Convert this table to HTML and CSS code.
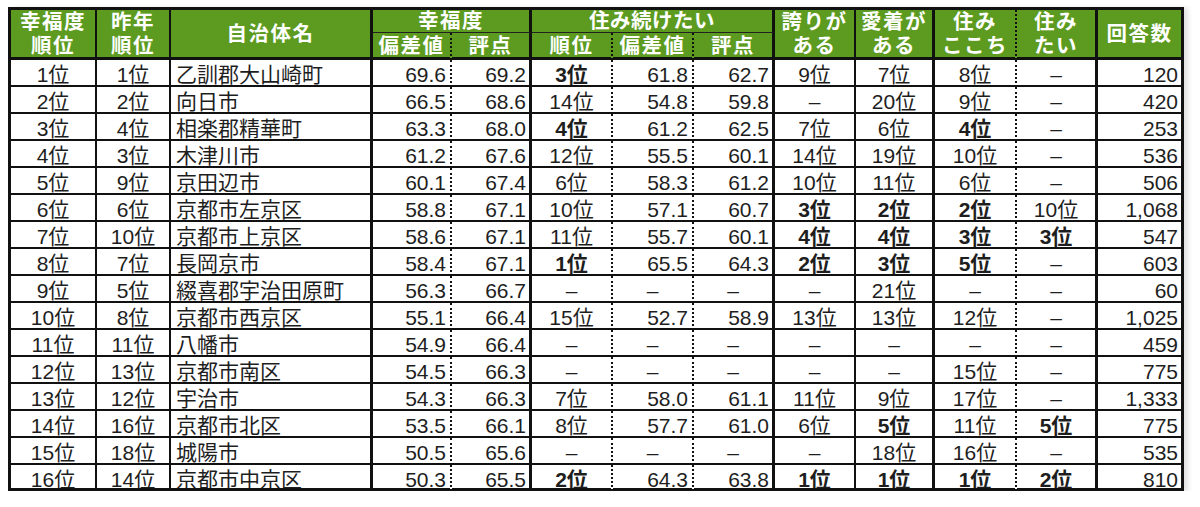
FILE: index.html
```html
<!DOCTYPE html>
<html lang="ja">
<head>
<meta charset="utf-8">
<title>幸福度ランキング 京都府</title>
<link rel="stylesheet" href="styles.css">
</head>
<body>
<div class="wrap">
  <div class="grid" role="table">
    <div class="h h-rank" role="columnheader"><span>幸福度</span><span>順位</span></div>
    <div class="h h-last" role="columnheader"><span>昨年</span><span>順位</span></div>
    <div class="h h-name" role="columnheader">自治体名</div>
    <div class="h h-g1" role="columnheader">幸福度</div>
    <div class="h h-g2" role="columnheader">住み続けたい</div>
    <div class="h h-pride" role="columnheader"><span>誇りが</span><span>ある</span></div>
    <div class="h h-attach" role="columnheader"><span>愛着が</span><span>ある</span></div>
    <div class="h h-koko" role="columnheader"><span>住み</span><span>ここち</span></div>
    <div class="h h-sumi" role="columnheader"><span>住み</span><span>たい</span></div>
    <div class="h h-count" role="columnheader">回答数</div>
    <div class="h h-s h-s1" role="columnheader">偏差値</div>
    <div class="h h-s h-s2" role="columnheader">評点</div>
    <div class="h h-s h-s3" role="columnheader">順位</div>
    <div class="h h-s h-s4" role="columnheader">偏差値</div>
    <div class="h h-s h-s5" role="columnheader">評点</div>

    <div class="row" role="row"><div>1位</div><div>1位</div><div>乙訓郡大山崎町</div><div>69.6</div><div>69.2</div><div class="b">3位</div><div>61.8</div><div>62.7</div><div>9位</div><div>7位</div><div>8位</div><div class="d">–</div><div>120</div></div>
    <div class="row" role="row"><div>2位</div><div>2位</div><div>向日市</div><div>66.5</div><div>68.6</div><div>14位</div><div>54.8</div><div>59.8</div><div class="d">–</div><div>20位</div><div>9位</div><div class="d">–</div><div>420</div></div>
    <div class="row" role="row"><div>3位</div><div>4位</div><div>相楽郡精華町</div><div>63.3</div><div>68.0</div><div class="b">4位</div><div>61.2</div><div>62.5</div><div>7位</div><div>6位</div><div class="b">4位</div><div class="d">–</div><div>253</div></div>
    <div class="row" role="row"><div>4位</div><div>3位</div><div>木津川市</div><div>61.2</div><div>67.6</div><div>12位</div><div>55.5</div><div>60.1</div><div>14位</div><div>19位</div><div>10位</div><div class="d">–</div><div>536</div></div>
    <div class="row" role="row"><div>5位</div><div>9位</div><div>京田辺市</div><div>60.1</div><div>67.4</div><div>6位</div><div>58.3</div><div>61.2</div><div>10位</div><div>11位</div><div>6位</div><div class="d">–</div><div>506</div></div>
    <div class="row" role="row"><div>6位</div><div>6位</div><div>京都市左京区</div><div>58.8</div><div>67.1</div><div>10位</div><div>57.1</div><div>60.7</div><div class="b">3位</div><div class="b">2位</div><div class="b">2位</div><div>10位</div><div>1,068</div></div>
    <div class="row" role="row"><div>7位</div><div>10位</div><div>京都市上京区</div><div>58.6</div><div>67.1</div><div>11位</div><div>55.7</div><div>60.1</div><div class="b">4位</div><div class="b">4位</div><div class="b">3位</div><div class="b">3位</div><div>547</div></div>
    <div class="row" role="row"><div>8位</div><div>7位</div><div>長岡京市</div><div>58.4</div><div>67.1</div><div class="b">1位</div><div>65.5</div><div>64.3</div><div class="b">2位</div><div class="b">3位</div><div class="b">5位</div><div class="d">–</div><div>603</div></div>
    <div class="row" role="row"><div>9位</div><div>5位</div><div>綴喜郡宇治田原町</div><div>56.3</div><div>66.7</div><div class="d">–</div><div class="d">–</div><div class="d">–</div><div class="d">–</div><div>21位</div><div class="d">–</div><div class="d">–</div><div>60</div></div>
    <div class="row" role="row"><div>10位</div><div>8位</div><div>京都市西京区</div><div>55.1</div><div>66.4</div><div>15位</div><div>52.7</div><div>58.9</div><div>13位</div><div>13位</div><div>12位</div><div class="d">–</div><div>1,025</div></div>
    <div class="row" role="row"><div>11位</div><div>11位</div><div>八幡市</div><div>54.9</div><div>66.4</div><div class="d">–</div><div class="d">–</div><div class="d">–</div><div class="d">–</div><div class="d">–</div><div class="d">–</div><div class="d">–</div><div>459</div></div>
    <div class="row" role="row"><div>12位</div><div>13位</div><div>京都市南区</div><div>54.5</div><div>66.3</div><div class="d">–</div><div class="d">–</div><div class="d">–</div><div class="d">–</div><div class="d">–</div><div>15位</div><div class="d">–</div><div>775</div></div>
    <div class="row" role="row"><div>13位</div><div>12位</div><div>宇治市</div><div>54.3</div><div>66.3</div><div>7位</div><div>58.0</div><div>61.1</div><div>11位</div><div>9位</div><div>17位</div><div class="d">–</div><div>1,333</div></div>
    <div class="row" role="row"><div>14位</div><div>16位</div><div>京都市北区</div><div>53.5</div><div>66.1</div><div>8位</div><div>57.7</div><div>61.0</div><div>6位</div><div class="b">5位</div><div>11位</div><div class="b">5位</div><div>775</div></div>
    <div class="row" role="row"><div>15位</div><div>18位</div><div>城陽市</div><div>50.5</div><div>65.6</div><div class="d">–</div><div class="d">–</div><div class="d">–</div><div class="d">–</div><div>18位</div><div>16位</div><div class="d">–</div><div>535</div></div>
    <div class="row last" role="row"><div>16位</div><div>14位</div><div>京都市中京区</div><div>50.3</div><div>65.5</div><div class="b">2位</div><div>64.3</div><div>63.8</div><div class="b">1位</div><div class="b">1位</div><div class="b">1位</div><div class="b">2位</div><div>810</div></div>
  </div>
</div>
</body>
</html>
```

FILE: styles.css
```css
html, body {
  margin: 0;
  padding: 0;
  background: #ffffff;
}

.wrap {
  padding: 7px 0 0 8px;
}

.grid {
  display: grid;
  width: max-content;
  grid-template-columns: 86px 74px 202px 79px 80px 81px 81px 81px 81px 79px 82px 81px 86px;
  grid-template-rows: 23px 27px repeat(15, 27px) 26px;
  border-left: 3px solid #111;
  border-top: 3px solid #111;
  font-family: "Liberation Sans", "Noto Sans CJK JP", sans-serif;
  font-size: 21px;
  color: #1e1e1e;
  box-shadow: 4px 1px 5px rgba(0, 0, 0, 0.12);
}

/* ---------- header ---------- */
.h {
  box-sizing: border-box;
  background: #5c9b20;
  color: #ffffff;
  font-family: "Liberation Sans", "Noto Sans CJK JP", sans-serif;
  font-weight: 700;
  font-size: 20.5px;
  line-height: 22px;
  letter-spacing: 1.5px;
  display: flex;
  flex-direction: column;
  align-items: center;
  justify-content: center;
  text-align: center;
  white-space: nowrap;
  border-right: 2px solid #111;
  border-bottom: 3px solid #111;
}

.h > span {
  display: block;
  height: 23.5px;
  line-height: 23.5px;
}

.h-rank  { grid-column: 1; grid-row: 1 / 3; }
.h-last  { grid-column: 2; grid-row: 1 / 3; }
.h-name  { grid-column: 3; grid-row: 1 / 3; border-right-width: 3px; }
.h-g1    { grid-column: 4 / 6; grid-row: 1; border-right-width: 3px; border-bottom: 1px solid #222; }
.h-g2    { grid-column: 6 / 9; grid-row: 1; border-right-width: 3px; border-bottom: 1px solid #222; letter-spacing: 0.5px; }
.h-pride { grid-column: 9; grid-row: 1 / 3; }
.h-attach{ grid-column: 10; grid-row: 1 / 3; border-right-width: 3px; }
.h-koko  { grid-column: 11; grid-row: 1 / 3; border-right: 2px dotted #111; }
.h-sumi  { grid-column: 12; grid-row: 1 / 3; border-right-width: 3px; }
.h-count { grid-column: 13; grid-row: 1 / 3; border-right-width: 3px; }

.h-s  { grid-row: 2; padding-top: 1px; line-height: 24px; }
.h-s1 { grid-column: 4; border-right: 2px dotted #111; }
.h-s2 { grid-column: 5; border-right-width: 3px; }
.h-s3 { grid-column: 6; border-right: 2px dotted #111; }
.h-s4 { grid-column: 7; border-right: 2px dotted #111; }
.h-s5 { grid-column: 8; border-right-width: 3px; }

/* ---------- body rows ---------- */
.row {
  display: contents;
}

.row > div {
  box-sizing: border-box;
  border-right: 2px solid #111;
  border-bottom: 2px solid #111;
  line-height: 29px;
  white-space: nowrap;
  text-align: center;
  overflow: hidden;
}

.row.last > div {
  border-bottom-width: 3px;
}

.row > div.b {
  font-weight: 700;
}

.row > div:nth-child(3) {
  border-right-width: 3px;
  text-align: left;
  padding-left: 5px;
}

.row > div:nth-child(4) {
  border-right: 2px dotted #111;
  text-align: right;
  padding-right: 4px;
}

.row > div:nth-child(5) {
  border-right-width: 3px;
  text-align: right;
  padding-right: 3px;
}

.row > div:nth-child(6) {
  border-right: 2px dotted #111;
}

.row > div:nth-child(7) {
  border-right: 2px dotted #111;
  text-align: right;
  padding-right: 4px;
}

.row > div:nth-child(8) {
  border-right-width: 3px;
  text-align: right;
  padding-right: 3px;
}

.row > div:nth-child(10) {
  border-right-width: 3px;
}

.row > div:nth-child(11) {
  border-right: 2px dotted #111;
}

.row > div:nth-child(12) {
  border-right-width: 3px;
}

.row > div:nth-child(13) {
  border-right-width: 3px;
  text-align: right;
  padding-right: 3px;
}

/* empty values are centred in every column */
.row > div.d {
  text-align: center;
  padding-right: 0;
}
```
